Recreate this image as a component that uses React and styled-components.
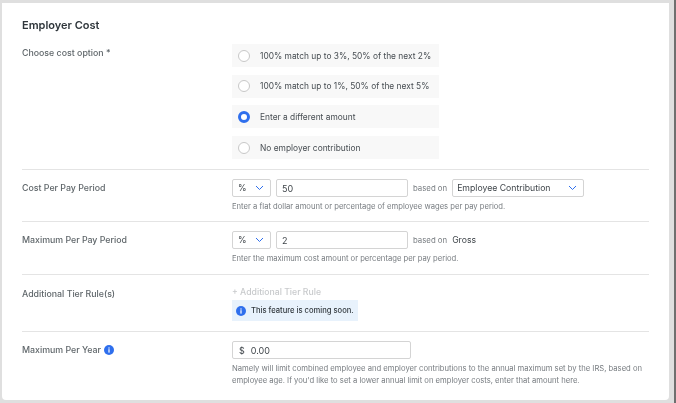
import React from 'react';
import styled, { createGlobalStyle } from 'styled-components';

const GlobalStyle = createGlobalStyle`
  html, body {
    margin: 0;
    padding: 0;
    background: #e4e4e4;
  }
  * { box-sizing: border-box; }
`;

const Page = styled.div`
  width: 676px;
  height: 403px;
  overflow: hidden;
  padding: 3px 5px 3px 2px;
  background: #dfdfdf;
  border-right: 2px solid #6f6f6f;
  font-family: Inter, 'Liberation Sans', sans-serif;
  filter: blur(0.3px);
`;

const Card = styled.div`
  height: 397px;
  padding: 15px 20px 0 20px;
  background: #fff;
  border-radius: 0 0 4px 4px;
`;

const Title = styled.h2`
  margin: 0;
  height: 14px;
  font-size: 11px;
  line-height: 14px;
  font-weight: 600;
  color: #2f363b;
`;

const Row = styled.section`
  display: grid;
  grid-template-columns: 210px 1fr;
  padding-top: ${(p) => p.$top}px;
  height: ${(p) => p.$height}px;
  border-bottom: ${(p) => (p.$last ? 'none' : '1px solid #e4e4e4')};
`;

const Label = styled.div`
  display: flex;
  align-items: center;
  align-self: start;
  gap: 3px;
  height: 17px;
  font-size: 8.8px;
  font-weight: 500;
  color: #5f666a;
`;

const Options = styled.div`
  display: flex;
  flex-direction: column;
  gap: 7.7px;
`;

const Option = styled.div`
  display: flex;
  align-items: center;
  gap: 10px;
  width: 207px;
  height: 23px;
  padding-left: 6px;
  background: #f8f8f8;
  font-size: 8.4px;
  color: #474d52;
`;

const Radio = styled.span`
  width: 12px;
  height: 12px;
  border-radius: 50%;
  background: #fff;
  border: ${(p) => (p.$on ? '3.5px solid #2f6fed' : '1px solid #c8c8c8')};
`;

const Controls = styled.div`
  display: flex;
  align-items: center;
  gap: 5px;
`;

const Select = styled.div`
  display: flex;
  align-items: center;
  justify-content: space-between;
  width: ${(p) => p.$width}px;
  height: 18px;
  padding: 0 6px 0 ${(p) => p.$pad}px;
  border: 1px solid #d4d4d4;
  border-radius: 2px;
  font-size: 8.7px;
  color: #3f454a;
`;

const Input = styled.div`
  display: flex;
  align-items: center;
  gap: ${(p) => p.$gap || 0}px;
  width: ${(p) => p.$width}px;
  height: 18px;
  padding-left: ${(p) => p.$pad || 5}px;
  border: 1px solid #d4d4d4;
  border-radius: 2px;
  font-size: 9px;
  color: #3f454a;
`;

const Based = styled.span`
  font-size: 7.8px;
  color: #777c80;
`;

const Plain = styled.span`
  font-size: 8.7px;
  color: #3f454a;
`;

const Help = styled.p`
  margin: 4px 0 0;
  font-size: 7.65px;
  line-height: 12px;
  color: #777c80;
`;

const TierLink = styled.div`
  height: 14px;
  font-size: 8.7px;
  line-height: 14px;
  font-weight: 500;
  color: #c8cacc;
`;

const Notice = styled.div`
  display: flex;
  align-items: center;
  gap: 5px;
  width: 126px;
  height: 21px;
  margin-top: 1px;
  padding-left: 4px;
  background: #e8f2fc;
  font-size: 7.6px;
  font-weight: 500;
  color: #30373c;
`;

const Chevron = () => (
  <svg width="9" height="6" viewBox="0 0 9 6" fill="none">
    <path d="M1 1l3.5 3.5L8 1" stroke="#2f6fed" strokeWidth="1" />
  </svg>
);

const InfoIcon = () => (
  <svg width="10" height="10" viewBox="0 0 10 10">
    <circle cx="5" cy="5" r="5" fill="#2f6fed" />
    <rect x="4.4" y="4.2" width="1.2" height="3.4" fill="#fff" />
    <rect x="4.4" y="2.4" width="1.2" height="1.2" fill="#fff" />
  </svg>
);

const options = [
  '100% match up to 3%, 50% of the next 2%',
  '100% match up to 1%, 50% of the next 5%',
  'Enter a different amount',
  'No employer contribution',
];

export default function App() {
  return (
    <>
      <GlobalStyle />
      <Page>
        <Card>
          <Title>Employer Cost</Title>
          <Row $top={12} $height={138}>
            <Label>Choose cost option *</Label>
            <Options>
              {options.map((text, i) => (
                <Option key={text}>
                  <Radio $on={i === 2} />
                  {text}
                </Option>
              ))}
            </Options>
          </Row>
          <Row $top={9} $height={52}>
            <Label>Cost Per Pay Period</Label>
            <div>
              <Controls>
                <Select $width={39} $pad={5}>% <Chevron /></Select>
                <Input $width={132}>50</Input>
                <Based>based on</Based>
                <Select $width={132} $pad={4}>Employee Contribution <Chevron /></Select>
              </Controls>
              <Help>Enter a flat dollar amount or percentage of employee wages per pay period.</Help>
            </div>
          </Row>
          <Row $top={9} $height={53}>
            <Label>Maximum Per Pay Period</Label>
            <div>
              <Controls>
                <Select $width={39} $pad={5}>% <Chevron /></Select>
                <Input $width={132}>2</Input>
                <Based>based on</Based>
                <Plain>Gross</Plain>
              </Controls>
              <Help>Enter the maximum cost amount or percentage per pay period.</Help>
            </div>
          </Row>
          <Row $top={10} $height={57}>
            <Label>Additional Tier Rule(s)</Label>
            <div>
              <TierLink>+ Additional Tier Rule</TierLink>
              <Notice><InfoIcon />This feature is coming soon.</Notice>
            </div>
          </Row>
          <Row $top={9} $height={68} $last>
            <Label>Maximum Per Year <InfoIcon /></Label>
            <div>
              <Input $width={179} $pad={6} $gap={6}><span>$</span>0.00</Input>
              <Help>
                Namely will limit combined employee and employer contributions to the annual maximum set by the IRS, based on
                employee age. If you'd like to set a lower annual limit on employer costs, enter that amount here.
              </Help>
            </div>
          </Row>
        </Card>
      </Page>
    </>
  );
}
